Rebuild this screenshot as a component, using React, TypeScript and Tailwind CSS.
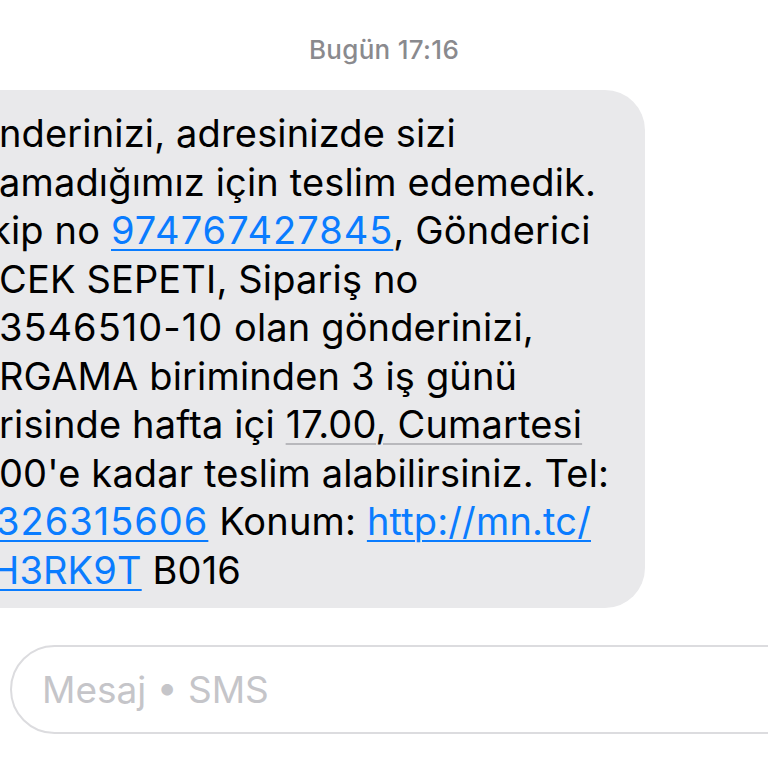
import React from "react";

const link = "text-[#0a7cff] underline decoration-[2px] underline-offset-[5px] decoration-[#0a7cff]";
const num = "tracking-[1px]";
const detect = "underline decoration-[2px] underline-offset-[5px] decoration-[#b8b8bc]";

export default function App() {
  return (
    <div className="w-[768px] h-[768px] overflow-hidden bg-white flex flex-col font-['Inter','Liberation_Sans',sans-serif]">
      <div className="h-[90px] pt-[33px] text-center text-[26px] leading-[34px] font-medium text-[#8a8a8e] tracking-[0.3px]">
        Bugün 17:16
      </div>
      <div className="ml-[-40px] w-[685px] h-[518px] rounded-[40px] bg-[#e9e9eb] pl-[39px] pt-[19px] text-[38px] leading-[48.5px] text-black whitespace-nowrap tracking-[0.15px]">
        <div>nderinizi, adresinizde sizi</div>
        <div>amadığımız için teslim edemedik.</div>
        <div className="ml-[-9px]">
          kip no <span className={`${link} ${num}`}>974767427845</span>, Gönderici
        </div>
        <div>CEK SEPETI, Sipariş no</div>
        <div>
          <span className={num}>3546510-10</span> olan gönderinizi,
        </div>
        <div>RGAMA biriminden 3 iş günü</div>
        <div>
          risinde hafta içi <span className={detect}>17.00, Cumartesi</span>
        </div>
        <div>00'e kadar teslim alabilirsiniz. Tel:</div>
        <div className="ml-[-3px]">
          <span className={`${link} ${num}`}>326315606</span> Konum: <span className={link}>http://mn.tc/</span>
        </div>
        <div className="ml-[-8px]">
          <span className={link}>H3RK9T</span> B016
        </div>
      </div>
      <div className="mt-[37px] ml-[10px] mr-[-60px] h-[89px] rounded-[45px] border-2 border-[#dcdcdf] flex items-center pl-[30px] text-[37px] text-[#c5c5c9]">
        Mesaj • SMS
      </div>
    </div>
  );
}
